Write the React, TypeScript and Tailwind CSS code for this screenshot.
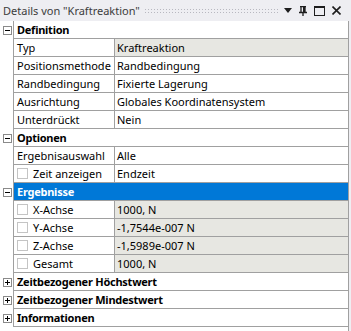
import React from 'react';

type Item =
  | { kind: 'header'; label: string; open: boolean; selected?: boolean }
  | { kind: 'prop'; label: string; value: string; gray?: boolean; check?: boolean };

const ITEMS: Item[] = [
  { kind: 'header', label: 'Definition', open: true },
  { kind: 'prop', label: 'Typ', value: 'Kraftreaktion', gray: true },
  { kind: 'prop', label: 'Positionsmethode', value: 'Randbedingung' },
  { kind: 'prop', label: 'Randbedingung', value: 'Fixierte Lagerung' },
  { kind: 'prop', label: 'Ausrichtung', value: 'Globales Koordinatensystem' },
  { kind: 'prop', label: 'Unterdrückt', value: 'Nein' },
  { kind: 'header', label: 'Optionen', open: true },
  { kind: 'prop', label: 'Ergebnisauswahl', value: 'Alle' },
  { kind: 'prop', label: 'Zeit anzeigen', value: 'Endzeit', check: true },
  { kind: 'header', label: 'Ergebnisse', open: true, selected: true },
  { kind: 'prop', label: 'X-Achse', value: '1000, N', gray: true, check: true },
  { kind: 'prop', label: 'Y-Achse', value: '-1,7544e-007 N', gray: true, check: true },
  { kind: 'prop', label: 'Z-Achse', value: '-1,5989e-007 N', gray: true, check: true },
  { kind: 'prop', label: 'Gesamt', value: '1000, N', gray: true, check: true },
  { kind: 'header', label: 'Zeitbezogener Höchstwert', open: false },
  { kind: 'header', label: 'Zeitbezogener Mindestwert', open: false },
  { kind: 'header', label: 'Informationen', open: false },
];

function Toggle({ open }: { open: boolean }) {
  return (
    <svg width="9" height="9" viewBox="0 0 9 9" className="block">
      <rect x="0.5" y="0.5" width="8" height="8" fill="#fff" stroke="#8a8a8a" />
      <line x1="2" y1="4.5" x2="7" y2="4.5" stroke="#000" />
      {!open && <line x1="4.5" y1="2" x2="4.5" y2="7" stroke="#000" />}
    </svg>
  );
}

function Check() {
  return <div className="w-[11px] h-[11px] border border-[#c4c4c4] bg-white shrink-0" />;
}

function Row({ item }: { item: Item }) {
  if (item.kind === 'header') {
    return (
      <div className="flex h-[18px]">
        <div className="w-[13px] shrink-0 flex items-center pl-[3px]">
          <Toggle open={item.open} />
        </div>
        <div
          className={`flex-1 flex items-center pl-[3px] font-bold tracking-[-0.25px] border-l border-b border-[#a0a0a0] ${
            item.selected ? 'bg-[#0078d7] text-white' : 'text-black'
          }`}
        >
          {item.label}
        </div>
      </div>
    );
  }
  return (
    <div className="flex h-[18px]">
      <div className="w-[13px] shrink-0" />
      <div className="flex-1 flex border-l border-b border-[#a0a0a0]">
        <div className="w-[101px] shrink-0 flex items-center gap-[5px] pl-[3px] border-r border-[#a0a0a0] whitespace-nowrap overflow-hidden">
          {item.check && <Check />}
          <span>{item.label}</span>
        </div>
        <div className={`flex-1 flex items-center pl-[2px] whitespace-nowrap ${item.gray ? 'bg-[#e7e7e2]' : ''}`}>
          {item.value}
        </div>
      </div>
    </div>
  );
}

export default function App() {
  return (
    <div
      className="w-[351px] h-[331px] bg-white flex flex-col overflow-hidden text-[11px] leading-none text-black"
      style={{ fontFamily: '"Segoe UI", "Noto Sans", sans-serif' }}
    >
      {/* title bar */}
      <div className="h-[21px] shrink-0 bg-[#eeeef2] flex items-center pl-[3px] pr-[10px] text-[#3c3c3c] text-[11px]">
        <span className="whitespace-nowrap">Details von "Kraftreaktion"</span>
        <div className="flex-1 h-[5px] mx-[4px] bg-[radial-gradient(#b8b8c0_0.6px,transparent_0.8px)] bg-[length:3px_3px]" />
        <div className="flex items-center gap-[7px]">
          <svg width="8" height="5" viewBox="0 0 8 5">
            <path d="M0 0H8L4 5Z" fill="#1e1e1e" />
          </svg>
          <svg width="8" height="10" viewBox="0 0 8 10">
            <path d="M1 0.5H7M2 0.5V6M6 0.5V6M0 6.5H8M4 6.5V10" stroke="#1e1e1e" fill="none" strokeWidth="1.3" />
            <rect x="4" y="1" width="2" height="5" fill="#1e1e1e" />
          </svg>
          <svg width="11" height="10" viewBox="0 0 11 10">
            <rect x="0.5" y="1" width="10" height="8.5" fill="none" stroke="#1e1e1e" />
            <rect x="0" y="0" width="11" height="2" fill="#1e1e1e" />
          </svg>
          <svg width="9" height="9" viewBox="0 0 9 9">
            <path d="M0.5 0.5L8.5 8.5M8.5 0.5L0.5 8.5" stroke="#1e1e1e" strokeWidth="1.6" />
          </svg>
        </div>
      </div>
      {/* property grid */}
      <div className="flex flex-1">
        <div className="flex-1 flex flex-col border-r border-[#a0a0a0]">
          {ITEMS.map((item, i) => (
            <Row key={i} item={item} />
          ))}
        </div>
        <div className="w-[2px] bg-[#eeeef2]" />
      </div>
    </div>
  );
}
